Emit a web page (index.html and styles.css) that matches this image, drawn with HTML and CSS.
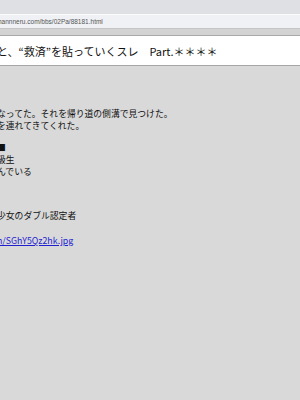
FILE: index.html
```html
<!DOCTYPE html>
<html>
<head>
    <link rel="stylesheet" href="styles.css">
</head>
<body>
    <div class="chrome">
        <div class="tabstrip"></div>
        <div class="urlbar">
            <span class="url">hannneru.com/bbs/02Pa/88181.html</span>
        </div>
        <div class="toolbar"></div>
    </div>

    <div class="title">
        <h1>と、“救済”を貼っていくスレ　Part.＊＊＊＊</h1>
    </div>

    <div class="post">
        <p class="line first">なってた。それを帰り道の側溝で見つけた。</p>
        <p class="line">を連れてきてくれた。</p>
        <p class="line gap">■</p>
        <p class="line">級生</p>
        <p class="line">んでいる</p>
        <p class="line gap2">少女のダブル認定者</p>
        <p class="line gap3"><a href="#">n/SGhY5Qz2hk.jpg</a></p>
    </div>
</body>
</html>
```

FILE: styles.css
```css
body {
    margin: 0;
    background: #d9d9d9;
    font-family: "Noto Sans CJK JP", "Noto Sans", sans-serif;
    color: #111;
    overflow: hidden;
}
.chrome {
    background: #dfe0e4;
}
.tabstrip {
    height: 14px;
}
.urlbar {
    height: 13px;
    background: #eff1f4;
    border-top: 1px solid #fbfbfc;
    display: flex;
    align-items: center;
}
.url {
    font-family: "Liberation Sans", sans-serif;
    font-size: 6.5px;
    color: #555;
    margin-left: -2px;
}
.toolbar {
    height: 6px;
    background: #d3d3d3;
    border-top: 1px solid #c4c4c4;
    border-bottom: 1px solid #a9a9a9;
}
.title {
    background: #fff;
    height: 29px;
    border-bottom: 1px solid #a6a6a6;
    display: flex;
    align-items: center;
}
.title h1 {
    margin: 0 0 0 -3px;
    font-size: 11px;
    font-weight: normal;
    white-space: nowrap;
}
.post {
    padding-top: 42px;
}
.line {
    margin: 0 0 0 -3px;
    font-size: 8.8px;
    line-height: 12px;
    white-space: nowrap;
}
.gap {
    margin-top: 10px;
}
.gap2 {
    margin-top: 32px;
}
.gap3 {
    margin-top: 13px;
}
a {
    color: #1f1fd0;
}
```
